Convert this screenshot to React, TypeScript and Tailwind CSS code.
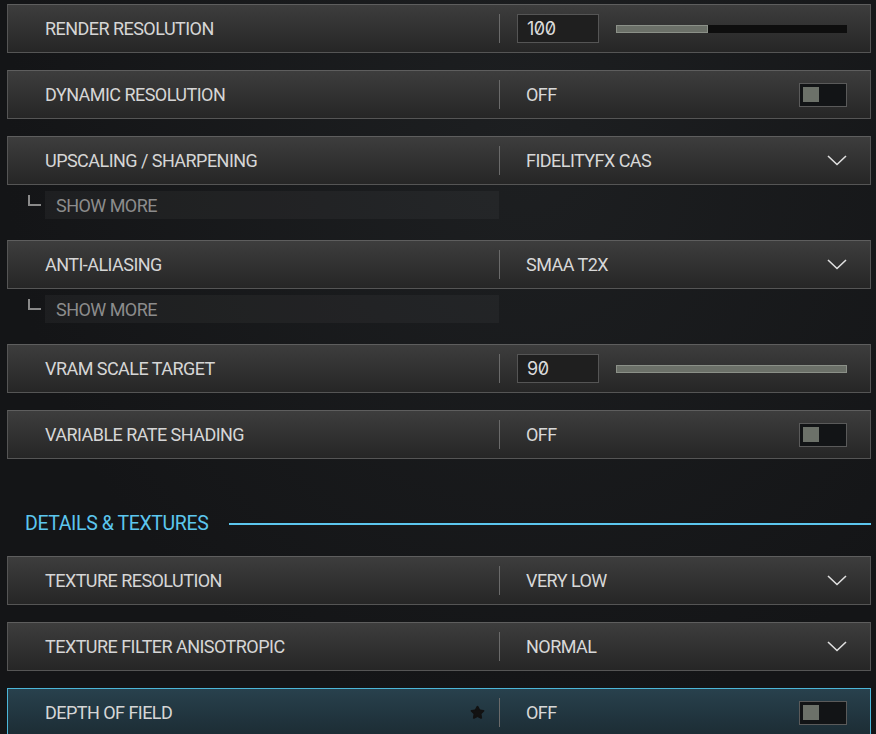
import { Star } from 'lucide-react';

type Control =
  | { kind: 'slider'; value: number; pct: number }
  | { kind: 'toggle'; value: string }
  | { kind: 'select'; value: string };

type Setting = {
  label: string;
  control: Control;
  showMore?: boolean;
  active?: boolean;
};

const renderSettings: Setting[] = [
  { label: 'RENDER RESOLUTION', control: { kind: 'slider', value: 100, pct: 40 } },
  { label: 'DYNAMIC RESOLUTION', control: { kind: 'toggle', value: 'OFF' } },
  { label: 'UPSCALING / SHARPENING', control: { kind: 'select', value: 'FIDELITYFX CAS' }, showMore: true },
  { label: 'ANTI-ALIASING', control: { kind: 'select', value: 'SMAA T2X' }, showMore: true },
  { label: 'VRAM SCALE TARGET', control: { kind: 'slider', value: 90, pct: 100 } },
  { label: 'VARIABLE RATE SHADING', control: { kind: 'toggle', value: 'OFF' } },
];

const detailSettings: Setting[] = [
  { label: 'TEXTURE RESOLUTION', control: { kind: 'select', value: 'VERY LOW' } },
  { label: 'TEXTURE FILTER ANISOTROPIC', control: { kind: 'select', value: 'NORMAL' } },
  { label: 'DEPTH OF FIELD', control: { kind: 'toggle', value: 'OFF' }, active: true },
];

const font = 'font-["Roboto","Liberation_Sans",sans-serif]';

function Toggle() {
  return (
    <div className="w-12 h-6 border border-[#5a5a5a] bg-[#121416] flex items-center pl-[3px]">
      <div className="w-4 h-[15px] bg-[#6c7169]" />
    </div>
  );
}

function Chevron() {
  return (
    <svg width="20" height="11" viewBox="0 0 20 11" fill="none">
      <path d="M1 1l9 8.5L19 1" stroke="#e0e0e0" strokeWidth="1.6" />
    </svg>
  );
}

function SettingControl({ control }: { control: Control }) {
  if (control.kind === 'slider') {
    return (
      <div className="flex items-center flex-1 pl-[17px]">
        <div className="w-[82px] h-[29px] border border-[#555] bg-[#1f1f1f] flex items-center pl-[9px]">
          <span className="font-['Inter',sans-serif] slashed-zero text-[18px] text-[#dcdcdc] tracking-tight">
            {control.value}
          </span>
        </div>
        <div className="ml-[17px] flex-1 h-2 bg-[#0e0e0e]">
          <div
            className="h-full bg-[#6b7068] border border-[#8b9088]"
            style={{ width: `${control.pct}%` }}
          />
        </div>
      </div>
    );
  }
  return (
    <div className="flex items-center justify-between flex-1 pl-[26px]">
      <span className="text-[18px] text-[#d8d8d8] tracking-[-0.03em]">{control.value}</span>
      {control.kind === 'toggle' ? <Toggle /> : <Chevron />}
    </div>
  );
}

function SettingRow({ s }: { s: Setting }) {
  return (
    <div className="flex flex-col shrink-0">
      <div
        className={
          s.active
            ? 'h-[49px] flex items-center border border-[#4cb6d8] bg-gradient-to-b from-[#28414d] to-[#1c2c34] pr-[23px]'
            : 'h-[49px] flex items-center border border-[#555] border-t-[#5e5e5e] bg-gradient-to-b from-[#3d3d3d] to-[#262626] pr-[23px]'
        }
      >
        <div className="w-[491px] flex items-center justify-between pl-[37px] pr-[14px]">
          <span className="text-[18px] text-[#d6d6d6] tracking-[-0.03em]">{s.label}</span>
          {s.active && <Star size={15} fill="#121212" stroke="#121212" />}
        </div>
        <div className="w-px h-[29px] bg-[#6a6a6a]" />
        <SettingControl control={s.control} />
      </div>
      {s.showMore && (
        <div className="flex items-start mt-[6px] ml-[21px] mb-[4px]">
          <div className="w-[13px] h-[11px] mt-1 border-l-2 border-b-2 border-[#8a8a8a] mr-1" />
          <div className="w-[454px] h-7 bg-white/[0.04] flex items-center pl-[11px]">
            <span className="text-[18px] text-[#8c8c8c] tracking-[-0.03em]">SHOW MORE</span>
          </div>
        </div>
      )}
    </div>
  );
}

export default function App() {
  return (
    <div
      className={`${font} h-[734px] w-[876px] overflow-hidden bg-[#151618] bg-[radial-gradient(ellipse_at_60%_20%,#1d1f21_0%,#141517_70%)] pt-1 pl-[7px] pr-[5px]`}
    >
      <div className="flex flex-col gap-[17px]">
        {renderSettings.map((s) => (
          <SettingRow key={s.label} s={s} />
        ))}
      </div>

      <div className="flex items-center h-[26px] mt-[52px] mb-[19px] pl-[18px]">
        <span className="text-[19.5px] text-[#5cc6ee] tracking-[-0.02em]">DETAILS &amp; TEXTURES</span>
        <div className="flex-1 h-[2px] bg-[#5cc6ee] ml-[21px]" />
      </div>

      <div className="flex flex-col gap-[17px]">
        {detailSettings.map((s) => (
          <SettingRow key={s.label} s={s} />
        ))}
      </div>
    </div>
  );
}
